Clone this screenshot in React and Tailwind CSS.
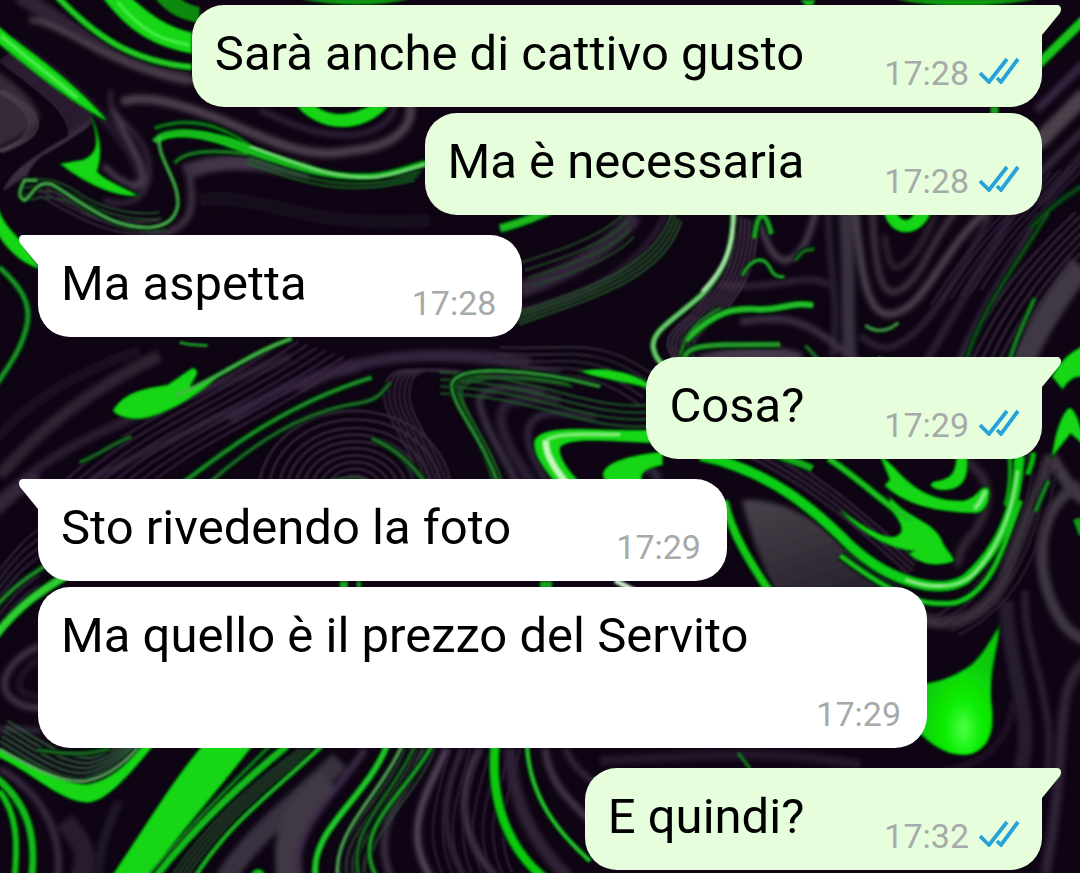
const messages = [
  { id: 1, text: "Sarà anche di cattivo gusto", time: "17:28", mine: true, tail: true },
  { id: 2, text: "Ma è necessaria", time: "17:28", mine: true, tail: false },
  { id: 3, text: "Ma aspetta", time: "17:28", mine: false, tail: true },
  { id: 4, text: "Cosa?", time: "17:29", mine: true, tail: true },
  { id: 5, text: "Sto rivedendo la foto", time: "17:29", mine: false, tail: true },
  { id: 6, text: "Ma quello è il prezzo del Servito", time: "17:29", mine: false, tail: false },
  { id: 7, text: "E quindi?", time: "17:32", mine: true, tail: true },
];

// wide smoky bands: [path, width, colour]
const smoke = [
  ["M20 -5C60 20 110 62 190 78", 16, "#302435"],
  ["M30 20C60 20 110 70 200 82", 5, "#4d434d"],
  ["M10 40C40 60 80 90 110 125C140 160 150 190 130 190", 10, "#22162a"],
  ["M185 172C215 160 250 158 310 172", 15, "#43364a"],
  ["M190 165C190 200 205 225 150 238", 7, "#3b2d41"],
  ["M122 102C150 92 190 108 220 119C280 145 310 160 355 150C395 146 415 125 410 104", 9, "#4a3d4c"],
  ["M260 110C300 128 320 136 355 135C385 130 395 115 395 104", 5, "#30243a"],
  ["M112 108C125 135 148 165 143 182C135 190 118 180 104 165", 5, "#4b3f50"],
  ["M104 200C150 215 160 170 140 140C125 118 105 110 112 90", 4, "#3b2b41"],
  ["M200 200C260 190 300 230 430 220", 14, "#160a1c"],
  ["M1036 144L1085 94", 16, "#484149"],
  ["M1036 176L1085 128", 7, "#33283a"],
  ["M1036 110L1085 62", 8, "#342840"],
  ["M1040 205L1085 150", 5, "#33283a"],
  ["M0 475C40 430 85 392 160 355", 12, "#2d2133"],
  ["M-5 440C30 400 80 370 140 350", 10, "#1c1022"],
  ["M0 500C70 430 160 410 290 356", 9, "#291d30"],
  ["M90 480C170 440 260 390 360 368", 6, "#33263b"],
  ["M230 420C330 350 430 345 530 360", 8, "#30233a"],
  ["M300 390C370 350 450 352 560 372", 5, "#35283e"],
  ["M520 290C560 275 600 258 635 215", 16, "#33273a"],
  ["M520 310C580 300 640 270 665 215", 6, "#291c30"],
  ["M855 212C862 290 870 314 890 314C925 310 940 250 985 212", 7, "#4b404d"],
  ["M872 212C875 270 880 292 894 292C920 285 930 240 955 212", 6, "#3d323f"],
  ["M884 235C888 262 892 272 900 266C915 258 925 235 935 215", 5, "#302534"],
  ["M845 212C850 290 846 330 850 358", 13, "#393140"],
  ["M828 212C828 270 840 300 832 356", 5, "#30253a"],
  ["M760 222C770 260 785 270 800 250C808 240 812 225 815 212", 6, "#4a3d4e"],
  ["M720 285C780 290 810 270 828 285", 6, "#30243a"],
  ["M700 362C740 350 780 352 800 360", 15, "#43384a"],
  ["M740 322C800 310 815 330 855 360", 7, "#3b2f43"],
  ["M1080 265C1055 300 1035 330 1020 365", 24, "#403944"],
  ["M1040 215C1010 270 980 310 960 362", 9, "#32263a"],
  ["M1010 215C980 270 950 320 925 362", 8, "#291d31"],
  ["M990 215C960 270 930 330 895 345C885 350 870 345 860 335", 5, "#33273a"],
  ["M1050 455C1070 490 1080 500 1090 500", 12, "#403844"],
  ["M1080 485C1040 500 1030 560 1055 610C1065 630 1075 635 1085 640", 11, "#3d3442"],
  ["M920 618C960 630 990 610 1005 575C1020 530 1040 490 1050 455", 12, "#3b313e"],
  ["M955 455C985 470 998 490 975 530C960 545 955 560 960 565", 9, "#2d2233"],
  ["M1005 600C1010 680 1035 720 1020 768", 14, "#261a30"],
  ["M1025 590C1020 650 1060 700 1045 780", 6, "#2f2338"],
  ["M1085 660C1050 690 1070 740 1045 873", 10, "#2e2236"],
  ["M940 770C985 765 1010 740 1012 700", 5, "#221629"],
  ["M40 645C8 660 -8 688 18 702C28 708 36 707 45 707", 6, "#43364a"],
  ["M45 655C22 668 14 684 24 692C30 696 38 696 45 696", 6, "#20132a"],
  ["M-5 730C10 726 25 729 42 730", 5, "#352a3c"],
  ["M-5 510C10 495 25 480 40 480", 14, "#32263a"],
  ["M0 768C40 790 64 830 58 878", 6, "#3b2d43"],
  ["M65 820C85 845 90 850 80 880", 20, "#251a2e"],
  ["M120 800C105 830 100 850 98 880", 10, "#1e1227"],
  ["M340 760C300 800 260 825 225 878", 20, "#38303f"],
  ["M330 780C290 810 285 840 290 878", 26, "#403945"],
  ["M365 748C340 790 295 820 296 878", 6, "#3d2d4a"],
  ["M425 748C400 800 370 830 392 878", 6, "#3d3045"],
  ["M447 748C428 790 400 830 432 878", 6, "#5b4b60"],
  ["M480 748C455 790 460 840 498 878", 5, "#52425a"],
  ["M463 748C438 800 442 840 466 878", 4, "#40304a"],
  ["M510 748C512 810 540 850 570 878", 12, "#2e2236"],
  ["M545 748C550 785 570 800 600 830", 6, "#453a4b"],
  ["M565 748C575 770 590 780 610 790", 6, "#30253a"],
  ["M600 760C700 755 780 748 860 764", 10, "#20142a"],
  ["M545 392C500 382 474 390 480 405C485 430 510 465 520 490", 6, "#3b3046"],
  ["M560 400C510 395 492 400 505 435C512 455 525 470 535 490", 10, "#2a1e32"],
  ["M595 418C550 408 525 410 528 440C532 460 545 475 550 490", 6, "#33273c"],
  ["M640 470C655 465 660 475 655 490", 8, "#33273c"],
];

// fine lines repeated side by side: [path, copies, dx, dy, colour]
const contours = [
  ["M0 60C40 90 72 112 70 135C65 150 20 155 5 190", 8, 3, -2, "#3e2f45"],
  ["M-5 90C15 100 30 112 30 125C28 140 8 146 -5 152", 3, 4, 0, "#4b414e"],
  ["M20 183C40 176 55 178 75 190C105 212 140 215 160 212", 4, 2, 6, "#224a25"],
  ["M255 150C310 170 350 186 424 168", 4, -3, 4, "#196b20"],
  ["M160 232C120 240 80 220 40 195", 3, 0, -6, "#3b2c41"],
  ["M522 262C560 250 605 235 625 212", 4, 3, 8, "#254b29"],
  ["M510 315C580 290 655 270 672 212", 4, 3, 3, "#28592c"],
  ["M733 215C733 265 715 290 690 315C665 335 662 342 676 362", 7, 4, 1, "#45344a"],
  ["M1075 212C1025 260 990 300 960 366", 6, 9, 0, "#3b2f41"],
  ["M1090 160C1060 195 1030 212 980 290", 6, -10, 3, "#30253a"],
  ["M290 338C200 400 130 420 60 485", 8, 9, 3, "#3b2b41"],
  ["M450 490C430 430 400 410 412 380C416 370 430 366 470 372", 6, -5, 0, "#382a3e"],
  ["M560 378C490 365 444 367 450 388C455 410 480 435 495 488", 5, 3, 2, "#1d6324"],
  ["M500 347C570 350 600 335 655 376", 5, -4, 7, "#332d3a"],
  ["M440 372C540 375 590 412 655 404", 4, 0, 7, "#1f5d28"],
  ["M0 570C15 550 28 535 45 525", 8, -1, 10, "#35273f"],
  ["M0 740C30 758 60 780 85 777C108 770 125 758 135 745", 5, 2, -5, "#356340"],
  ["M405 748C385 800 330 835 342 878", 6, 6, 0, "#34463a"],
  ["M450 748C440 790 420 830 445 878", 8, 10, 0, "#30223a"],
  ["M300 748C250 785 205 825 170 878", 5, 5, 0, "#244b2a"],
  ["M735 450C800 478 850 520 910 575", 4, 2, -5, "#3b2e41"],
  ["M1028 452C1015 530 990 590 930 618", 5, 7, 4, "#2e2333"],
];

// bright strokes: [path, width, colour]
const strokes = [
  ["M58 -3C95 35 130 61 192 67", 5, "#22cb22"],
  ["M155 142C165 126 210 132 255 152C300 170 335 178 372 176C392 175 410 167 426 163", 5, "#17b61b"],
  ["M155 128C190 116 220 124 250 145", 2, "#14831a"],
  ["M160 136C156 158 181 180 178 206C173 232 140 230 115 221C90 211 70 194 52 184C36 180 33 196 25 200C17 196 21 189 25 180H38", 2, "#55bd5a"],
  ["M175 163C185 150 215 149 248 154", 2, "#25872b"],
  ["M1038 64L1085 18", 8, "#1bc21e"],
  ["M1085 184C1060 198 1045 212 1030 228", 3, "#11481a"],
  ["M0 267C22 287 31 302 28 322C24 345 12 362 -3 384", 4, "#1d942a"],
  ["M176 395C220 378 245 355 292 338", 3, "#46b54a"],
  ["M176 488C230 446 290 402 372 377", 3, "#20902a"],
  ["M210 482C275 425 320 408 362 402C382 398 384 388 391 382", 2, "#2b7732"],
  ["M80 462C100 454 115 442 132 436", 2, "#2a6e30"],
  ["M372 438C398 448 416 468 430 488", 3, "#28722e"],
  ["M600 386C540 370 447 360 452 388C455 410 482 435 500 488", 2, "#3aa641"],
  ["M733 213C733 255 720 275 700 296C675 318 652 330 653 346C655 360 664 368 678 372", 4, "#6ecf72"],
  ["M734 213C733 250 722 270 702 291", 2, "#d1f7cf"],
  ["M686 340C715 310 735 307 760 309C785 309 790 301 813 305", 5, "#22bd28"],
  ["M683 365C684 344 694 344 780 344", 4, "#259c2c"],
  ["M680 355C686 330 700 318 720 308", 2, "#2d8732"],
  ["M754 238C758 205 766 212 771 234", 4, "#20a526"],
  ["M742 275C752 256 764 256 770 268C774 277 781 277 784 276", 2, "#2dbb35"],
  ["M795 260C802 250 805 249 814 249", 2, "#227a28"],
  ["M865 325C876 333 888 331 898 322", 2, "#4c9850"],
  ["M881 362L883 358", 8, "#0fc511"],
  ["M1034 298C1022 325 1012 345 1005 374", 3, "#21842a"],
  ["M1048 212C1015 265 980 310 965 362", 2, "#1d5a24"],
  ["M805 345C815 355 820 362 828 372", 2, "#2d7333"],
  ["M500 228C525 222 540 214 550 211", 7, "#1cba1f"],
  ["M700 455C770 470 815 510 850 545C890 582 940 595 966 578C1000 548 1016 510 1019 455", 9, "#10ce14"],
  ["M905 579C930 588 955 588 970 576C995 553 1012 515 1017 470", 2, "#a3f1a0"],
  ["M840 555C900 600 925 606 955 602C990 592 1002 550 1020 500", 4, "#18c41c"],
  ["M1009 455C1011 475 1009 490 1005 505", 3, "#13a917"],
  ["M1033 452C1032 464 1029 468 1027 474", 4, "#0fbc13"],
  ["M724 500C732 535 752 565 770 592", 7, "#14c919"],
  ["M770 452C790 460 800 462 812 468", 6, "#16a81b"],
  ["M828 458C855 475 880 500 910 520", 5, "#1ac01e"],
  ["M1048 480C1042 493 1038 502 1035 511", 3, "#228b2a"],
  ["M1076 518L1082 534", 6, "#11a217"],
  ["M-4 635C20 604 42 590 68 574", 7, "#2dcd31"],
  ["M-4 606C15 585 30 575 46 565", 3, "#279030"],
  ["M0 790C17 812 19 840 15 878", 5, "#12bd17"],
  ["M-3 777C25 800 38 830 32 878", 6, "#14b91a"],
  ["M287 745C245 780 200 820 154 878", 6, "#18ba1c"],
  ["M270 745C230 785 190 825 145 878", 2, "#208c27"],
  ["M322 745C275 790 230 820 194 878", 3, "#25bc2c"],
  ["M387 745C365 800 308 830 316 878", 5, "#23c72a"],
  ["M402 745C380 795 332 830 338 878", 2, "#6bba6f"],
  ["M432 745C405 795 348 830 378 878", 3, "#239f29"],
  ["M415 745C390 800 345 830 360 878", 2, "#2a6e30"],
  ["M495 745C490 800 508 850 548 880", 8, "#0ac90c"],
  ["M527 745C530 800 562 835 590 860", 3, "#2ccc34"],
  ["M253 878C255 869 262 869 263 878", 5, "#13bd18"],
  ["M38 749C75 755 90 753 110 748", 2, "#247d2c"],
  ["M0 748C30 765 62 783 86 780C108 776 125 762 138 747", 2, "#6dac71"],
];

// solid pools of green
const pools = [
  "M-2 26C28 52 62 70 107 120C75 104 35 72 -2 42Z",
  "M104 -2C130 32 155 46 192 53V33C163 26 148 12 131 -2Z",
  "M298 106C320 132 362 134 388 106H370C350 117 330 117 315 106Z",
  "M159 142C157 126 200 124 252 146C285 158 310 166 345 176C310 174 265 160 228 146C190 132 166 136 159 142Z",
  "M92 117C101 142 98 154 84 160L62 164C80 178 110 196 137 195C119 185 102 179 97 171C103 154 100 135 92 117Z",
  "M-2 208C5 226 15 234 22 242L40 268C20 262 4 244 -2 232Z",
  "M114 410C126 390 150 388 168 385L193 368C203 371 191 380 190 387C201 384 210 378 222 372C200 393 176 408 150 416C136 420 119 417 114 410Z",
  "M884 212C890 238 920 238 930 212H915C910 223 900 223 896 212Z",
  "M582 371C608 366 640 374 656 390C630 380 605 380 582 371Z",
  "M650 430C600 432 545 422 535 440C532 455 548 472 562 490H588C570 475 556 455 560 446C570 436 610 440 650 442Z",
  "M662 452C620 456 600 466 604 477C610 486 612 490 618 494H655C638 482 632 470 662 464Z",
  "M880 455L893 467C915 492 935 501 962 501C982 496 976 486 988 488C990 497 986 510 976 512C925 511 900 499 885 485L890 479Z",
  "M966 455C969 482 958 488 945 489C933 489 925 483 937 481C955 478 955 468 957 455Z",
  "M890 498C910 520 930 520 940 538C944 549 951 553 953 560C933 567 920 562 909 553L915 550C890 548 865 535 840 510C865 528 884 540 896 536C906 532 902 522 890 508Z",
  "M1052 376C1065 352 1078 350 1084 344V376C1075 374 1068 378 1062 388Z",
  "M1052 455C1056 425 1065 408 1070 408C1078 416 1080 430 1084 445L1070 432Z",
  "M203 745H252C218 790 188 820 147 878H111C150 820 172 782 203 745Z",
  "M-2 748C30 766 62 782 86 784C108 782 128 764 143 745H153C132 770 108 800 88 801C60 800 35 772 -2 755Z",
];

const rings = [12, 20, 28, 36, 44, 52, 60, 68, 76, 86, 96];

function Wallpaper() {
  return (
    <svg
      className="absolute inset-0 h-full w-full"
      viewBox="0 0 1080 873"
      preserveAspectRatio="xMidYMid slice"
      fill="none"
      aria-hidden="true"
    >
      <defs>
        <filter id="smoke" x="-5%" y="-5%" width="110%" height="110%">
          <feGaussianBlur stdDeviation="2.4" />
        </filter>
        <filter id="soft" x="-5%" y="-5%" width="110%" height="110%">
          <feGaussianBlur stdDeviation="0.9" />
        </filter>
        <radialGradient id="drop" cx="0.55" cy="0.8" r="0.6">
          <stop offset="0" stopColor="#4dff45" />
          <stop offset="0.4" stopColor="#08ee04" />
          <stop offset="1" stopColor="#08c80a" />
        </radialGradient>
        <linearGradient id="grey" x1="0" y1="0" x2="0.6" y2="1">
          <stop offset="0" stopColor="#48424a" />
          <stop offset="1" stopColor="#29222e" />
        </linearGradient>
      </defs>
      <rect width="1080" height="873" fill="#0f0414" />

      <g filter="url(#smoke)">
        {smoke.map(([d, width, color]) => (
          <path key={d} d={d} stroke={color} strokeWidth={width} />
        ))}
        <path d="M-5 70C20 85 38 105 40 116C38 132 10 138 -5 152Z" fill="#352c38" />
        <path d="M742 500C785 495 840 530 905 592H775C765 570 750 535 742 500Z" fill="url(#grey)" />
      </g>

      <g filter="url(#soft)">
        {contours.map(([d, copies, dx, dy, color]) =>
          Array.from({ length: copies }, (_, i) => (
            <path
              key={d + i}
              d={d}
              stroke={color}
              strokeWidth="2"
              transform={`translate(${i * dx} ${i * dy})`}
            />
          ))
        )}
        {rings.map((r) => (
          <ellipse key={r} cx="355" cy="492" rx={r} ry={r * 0.85} stroke="#3b2e41" strokeWidth="2" />
        ))}
        <ellipse cx="350" cy="484" rx="22" ry="7" stroke="#1f5927" strokeWidth="2" />
        {strokes.map(([d, width]) => (
          <path key={d} d={d} stroke="#03220a" strokeWidth={width + 5} />
        ))}
        {pools.map((d) => (
          <path key={d} d={d} fill="#12d615" stroke="#034209" strokeWidth="3" paintOrder="stroke" />
        ))}
        {strokes.map(([d, width, color]) => (
          <path key={d} d={d} stroke={color} strokeWidth={width} />
        ))}

        {/* dim green along the top edge */}
        <path d="M155 -2C168 14 182 20 200 23V7C190 5 184 1 180 -2Z" fill="#088a0c" />
        <path d="M300 -1C340 7 380 6 410 -1ZM895 -1C930 8 990 8 1036 -1Z" fill="#0b9a10" />
        <path d="M800 0H815L812 6H806Z" fill="#18b31d" />

        {/* glossy highlights */}
        <path d="M546 440C544 455 560 475 572 490" stroke="#c4f9bd" strokeWidth="6" />
        <path d="M546 440C555 432 590 434 620 434" stroke="#7ff078" strokeWidth="3" />
        <path d="M250 146C300 164 330 178 372 177C392 176 410 168 426 164" stroke="#7fe382" strokeWidth="2" />
        <path d="M2 36C25 56 52 76 78 98" stroke="#4ff04f" strokeWidth="3" />
        <path d="M118 2C143 32 162 40 190 45" stroke="#45f045" strokeWidth="3" />
        <path d="M985 490C982 498 980 502 974 508" stroke="#83ed80" strokeWidth="4" />

        <path
          d="M998 628C997 648 988 668 990 700C994 728 990 744 972 752C952 757 934 746 920 732V684C942 682 958 674 972 664C986 650 990 640 998 628Z"
          fill="url(#drop)"
          stroke="#033d08"
          strokeWidth="4"
          paintOrder="stroke"
        />

        {/* glimpses in the narrow gaps between bubbles */}
        <path d="M340 584H348M357 584H361M540 584H552M990 110H998" stroke="#17a41c" strokeWidth="7" />
        <path d="M615 580L635 590" stroke="#c9e8c8" strokeWidth="5" />
        <path d="M180 342C190 345 200 345 208 345" stroke="#1ca020" strokeWidth="3" />
        <path d="M738 752L750 768" stroke="#146c1b" strokeWidth="4" />
      </g>
    </svg>
  );
}

function Ticks() {
  return (
    <svg className="mb-[6px] h-[28px] w-[41px] shrink-0" viewBox="0 0 41 28" fill="none" role="img" aria-label="Letto">
      <path d="M1 17L10 26L28 3M18 22L22 26L39 3" stroke="#27a3d9" strokeWidth="3.8" />
    </svg>
  );
}

function Tail({ mine }) {
  return (
    <svg
      className={
        mine
          ? "absolute top-0 left-full h-[31px] w-[20px] text-[#e6fedc]"
          : "absolute top-0 right-full h-[31px] w-[20px] -scale-x-100 text-white"
      }
      viewBox="0 0 20 31"
      aria-hidden="true"
    >
      <path d="M-1 0H15C19 0 20 4 18 8L0 30H-1Z" fill="currentColor" />
    </svg>
  );
}

function Bubble({ message }) {
  const { text, time, mine, tail } = message;

  let corners = "rounded-[32px]";
  if (tail) corners = mine ? "rounded-[32px] rounded-tr-none" : "rounded-[32px] rounded-tl-none";

  return (
    <li className={`flex ${mine ? "justify-end" : "justify-start"} ${tail ? "mt-5 first:mt-0" : "mt-[6px]"}`}>
      <div
        className={`relative flex max-w-[889px] flex-wrap items-end pt-[10px] pb-[14px] pl-[23px] ${corners} ${
          mine ? "gap-x-[80px] bg-[#e6fedc] pr-[22px]" : "gap-x-[105px] bg-white pr-[26px]"
        }`}
      >
        {tail && <Tail mine={mine} />}
        <p className="text-[49px] leading-[78px] text-black">{text}</p>
        <div className="ml-auto flex items-center gap-[10px] pt-[19px]">
          <time className="text-[34px] leading-[40px] text-[#a6aaa8]">{time}</time>
          {mine && <Ticks />}
        </div>
      </div>
    </li>
  );
}

function App() {
  return (
    <main className="relative min-h-screen overflow-hidden bg-[#0f0414] font-[Roboto,sans-serif]">
      <Wallpaper />
      <ul className="relative px-[38px] pt-[5px] pb-1">
        {messages.map((message) => (
          <Bubble key={message.id} message={message} />
        ))}
      </ul>
    </main>
  );
}

export default App;
